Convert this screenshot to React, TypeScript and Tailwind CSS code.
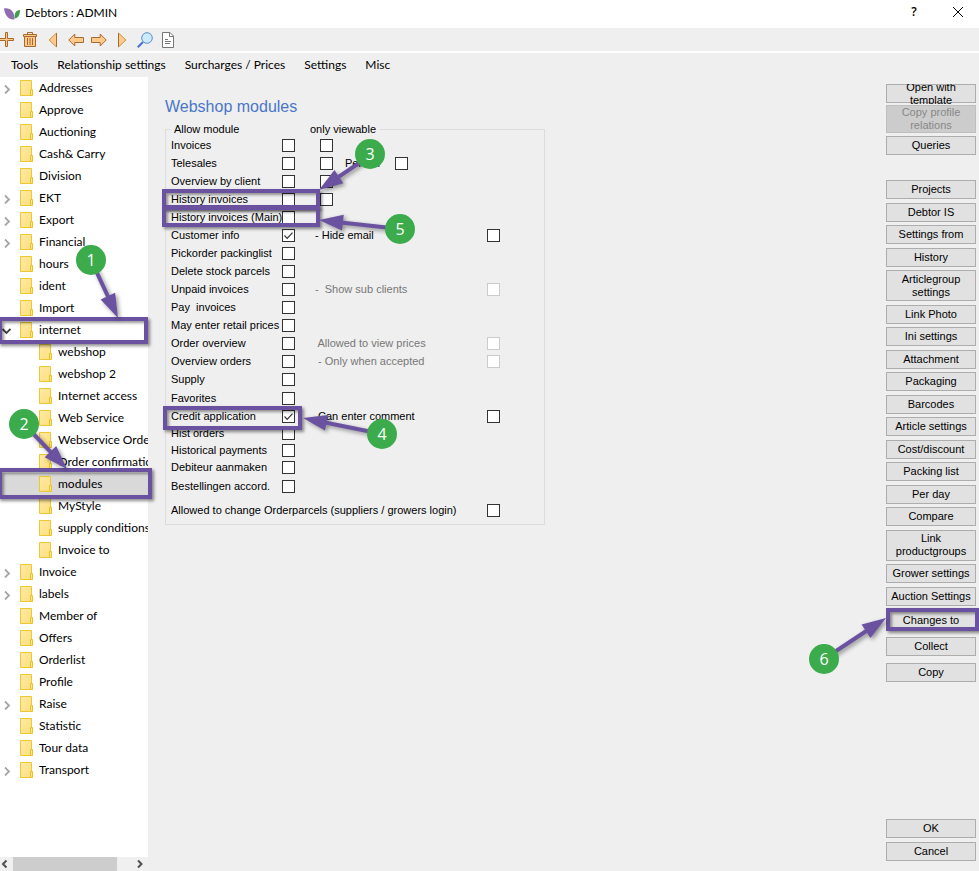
import type { ReactNode } from "react";

const UI = "font-['Lato','Open_Sans',sans-serif]";
const FORM = "font-['Liberation_Sans',Arial,sans-serif]";

type Node = { name: string; level?: 1 | 2; state?: "closed" | "open"; selected?: boolean };

const tree: Node[] = [
  { name: "Addresses", state: "closed" },
  { name: "Approve" },
  { name: "Auctioning" },
  { name: "Cash& Carry" },
  { name: "Division" },
  { name: "EKT", state: "closed" },
  { name: "Export", state: "closed" },
  { name: "Financial", state: "closed" },
  { name: "hours" },
  { name: "ident" },
  { name: "Import" },
  { name: "internet", state: "open" },
  { name: "webshop", level: 2 },
  { name: "webshop 2", level: 2 },
  { name: "Internet access", level: 2 },
  { name: "Web Service", level: 2 },
  { name: "Webservice Order", level: 2 },
  { name: "Order confirmation", level: 2 },
  { name: "modules", level: 2, selected: true },
  { name: "MyStyle", level: 2 },
  { name: "supply conditions", level: 2 },
  { name: "Invoice to", level: 2 },
  { name: "Invoice", state: "closed" },
  { name: "labels", state: "closed" },
  { name: "Member of" },
  { name: "Offers" },
  { name: "Orderlist" },
  { name: "Profile" },
  { name: "Raise", state: "closed" },
  { name: "Statistic" },
  { name: "Tour data" },
  { name: "Transport", state: "closed" },
];

type Row = {
  label: string;
  checked?: boolean;
  viewable?: boolean;
  per?: boolean;
  option?: string;
  disabled?: boolean;
};

const mainRows: Row[] = [
  { label: "Invoices", viewable: true },
  { label: "Telesales", viewable: true, per: true },
  { label: "Overview by client", viewable: true },
  { label: "History invoices", viewable: true },
  { label: "History invoices (Main)" },
  { label: "Customer info", checked: true, option: "- Hide email" },
  { label: "Pickorder packinglist" },
  { label: "Delete stock parcels" },
  { label: "Unpaid invoices", option: "-  Show sub clients", disabled: true },
  { label: "Pay  invoices" },
  { label: "May enter retail prices" },
  { label: "Order overview", option: " Allowed to view prices", disabled: true },
  { label: "Overview orders", option: " - Only when accepted", disabled: true },
  { label: "Supply" },
];
const creditRows: Row[] = [
  { label: "Favorites" },
  { label: "Credit application", checked: true, option: " Can enter comment" },
];
const historyRows: Row[] = [
  { label: "Hist orders" },
  { label: "Historical payments" },
  { label: "Debiteur aanmaken" },
];

const sideButtons = [
  "Projects", "Debtor IS", "Settings from", "History", "Articlegroup settings", "Link Photo",
  "Ini settings", "Attachment", "Packaging", "Barcodes", "Article settings", "Cost/discount",
  "Packing list", "Per day", "Compare", "Link productgroups", "Grower settings", "Auction Settings",
];
const tallButtons = ["Articlegroup settings", "Link productgroups"];

function Folder() {
  return (
    <svg className="h-4 w-3.5 shrink-0" viewBox="0 0 14 16" aria-hidden="true">
      <defs>
        <linearGradient id="folder" x1="0" y1="0" x2="1" y2="1">
          <stop offset="0" stopColor="#ffeaa6" />
          <stop offset="1" stopColor="#fddf7c" />
        </linearGradient>
      </defs>
      <path d="M.5.500h11v15H.5z" fill="url(#folder)" stroke="#edc832" />
      <path d="M10.500 9.500h2v6h-2z" fill="#fde58c" stroke="#e8c229" />
    </svg>
  );
}

function Chevron({ open }: { open: boolean }) {
  return open ? (
    <svg className="h-2.5 w-2.5" viewBox="0 0 10 10" aria-hidden="true">
      <path d="M1.500 3l4 4 4-4" fill="none" stroke="#404040" strokeWidth="1.800" />
    </svg>
  ) : (
    <svg className="h-2.5 w-2.5" viewBox="0 0 10 10" aria-hidden="true">
      <path d="M4 1.500l4 4-4 4" fill="none" stroke="#a6a6a6" strokeWidth="1.800" />
    </svg>
  );
}

function TreeRow({ node }: { node: Node }) {
  return (
    <li className={`flex h-[22px] items-center whitespace-nowrap ${node.selected ? "bg-[#d9d9d9]" : ""}`}>
      <span className={`flex shrink-0 pt-0.5 pl-px ${node.level === 2 ? "w-[39px]" : "w-5"}`}>
        {node.state && <Chevron open={node.state === "open"} />}
      </span>
      <Folder />
      <span className="pl-[5px]">{node.name}</span>
    </li>
  );
}

function Box({ id, label, checked, disabled }: { id: string; label: string; checked?: boolean; disabled?: boolean }) {
  return (
    <span className="grid size-[13px] shrink-0">
      <input
        id={id}
        type="checkbox"
        aria-label={label}
        defaultChecked={checked}
        disabled={disabled}
        className="peer col-start-1 row-start-1 size-[13px] appearance-none border border-[#333] bg-white disabled:border-[#ccc]"
      />
      <svg className="pointer-events-none invisible col-start-1 row-start-1 size-[13px] peer-checked:visible" viewBox="0 0 13 13" aria-hidden="true">
        <path d="M2.500 6.500l2.700 2.800 5.300-5.600" fill="none" stroke="#333" strokeWidth="1.200" />
      </svg>
    </span>
  );
}

function ModuleRow({ row, height }: { row: Row; height: string }) {
  const id = row.label.toLowerCase().replace(/[^a-z]+/g, "-");
  return (
    <div className={`flex items-center whitespace-pre ${height}`}>
      <label htmlFor={id} className="w-[111px] shrink-0">{row.label}</label>
      <Box id={id} label={row.label} checked={row.checked} />
      {row.viewable && (
        <span className="ml-[25px] flex items-center">
          <Box id={`${id}-view`} label={`${row.label} only viewable`} />
          {row.per && (
            <>
              <label htmlFor="per-uur" className="ml-3 w-[50px]">Per uur</label>
              <Box id="per-uur" label="Per uur" />
            </>
          )}
        </span>
      )}
      {row.option && (
        <span className="ml-5 flex items-center">
          <label htmlFor={`${id}-option`} className={`w-[172px] ${row.disabled ? "text-[#777]" : ""}`}>{row.option}</label>
          <Box id={`${id}-option`} label={row.option} disabled={row.disabled} />
        </span>
      )}
    </div>
  );
}

function SideButton({ children, tall }: { children: ReactNode; tall?: boolean }) {
  return (
    <button
      type="button"
      className={`flex w-full shrink-0 items-center justify-center border border-[#adadad] bg-[#e1e1e1] text-center leading-[13px] ${tall ? "h-[31px] px-2" : "h-[19px]"}`}
    >
      {children}
    </button>
  );
}

function Arrow({ x1, y1, x2, y2 }: { x1: number; y1: number; x2: number; y2: number }) {
  const length = Math.hypot(x2 - x1, y2 - y1);
  const angle = (Math.atan2(y2 - y1, x2 - x1) * 180) / Math.PI;
  return (
    <g transform={`translate(${x1} ${y1}) rotate(${angle})`}>
      <path d={`M0-2H${length - 20}V2H0z`} />
      <path d={`M${length} 0l-24-8v16z`} />
    </g>
  );
}

function Badge({ n, place }: { n: number; place: string }) {
  return (
    <span className={`absolute flex size-[30px] items-center justify-center rounded-full bg-[#3bab4c] font-['Open_Sans','Noto_Sans',sans-serif] text-base text-white ${place}`}>
      {n}
    </span>
  );
}

function Mark({ place }: { place: string }) {
  return (
    <span className={`absolute border-4 border-[#6b52a1] shadow-[2px_2px_3px_rgba(0,0,0,0.45),inset_2px_2px_3px_rgba(0,0,0,0.4)] ${place}`} />
  );
}

function Toolbar() {
  const arrow = { fill: "#fdc98c", stroke: "#a8692a" };
  const tool = "flex h-[22px] shrink-0 items-center justify-center";
  return (
    <div className="flex h-[25px] shrink-0 items-end border-b-2 border-white">
      <button type="button" aria-label="Add" className={`${tool} w-[18px]`}>
        <svg className="-ml-1.5 h-4 w-4" viewBox="0 0 16 16">
          <path d="M7.500.500h2v6h6v2h-6v6h-2v-6h-7v-2h7z" {...arrow} />
        </svg>
      </button>
      <button type="button" aria-label="Delete" className={`${tool} w-6`}>
        <svg className="h-4 w-4" viewBox="0 0 16 16">
          <path d="M2.500 4.500h11v10h-11z" {...arrow} />
          <path d="M1.500 2.500h13v2h-13z" {...arrow} />
          <path d="M5.500 2.500v-2h5v2M5.500 6v7M8 6v7M10.500 6v7" fill="none" stroke="#a8692a" />
        </svg>
      </button>
      <button type="button" aria-label="First" className={`${tool} w-[22px]`}>
        <svg className="h-4 w-4" viewBox="0 0 16 16">
          <path d="M4 8l7.500-7v14z" fill="#fdc98c" />
          <path d="M11.500 1v14" stroke="#a8692a" />
          <path d="M11.500 1L4 8l7.500 7" fill="none" stroke="#c99b3a" />
        </svg>
      </button>
      <button type="button" aria-label="Previous" className={`${tool} w-6`}>
        <svg className="h-4 w-4" viewBox="0 0 16 16">
          <path d="M.800 8l6-6v3.500h8.700v5H6.800V14z" {...arrow} />
        </svg>
      </button>
      <button type="button" aria-label="Next" className={`${tool} w-[22px]`}>
        <svg className="h-4 w-4" viewBox="0 0 16 16">
          <path d="M15.200 8l-6-6v3.500H.500v5h8.700V14z" {...arrow} />
        </svg>
      </button>
      <button type="button" aria-label="Last" className={`${tool} w-6`}>
        <svg className="h-4 w-4" viewBox="0 0 16 16">
          <path d="M12 8L4.500 1v14z" fill="#fdc98c" />
          <path d="M4.500 1v14" stroke="#a8692a" />
          <path d="M4.500 1L12 8l-7.500 7" fill="none" stroke="#c99b3a" />
        </svg>
      </button>
      <button type="button" aria-label="Search" className={`${tool} w-[22px]`}>
        <svg className="h-4 w-4" viewBox="0 0 16 16">
          <path d="M.800 15.200L6 10" stroke="#4472d8" strokeWidth="2" />
          <circle cx="10" cy="6" r="5.300" fill="#cdeafd" stroke="#5b8cc8" />
        </svg>
      </button>
      <button type="button" aria-label="Document" className={`${tool} w-6`}>
        <svg className="h-4 w-4" viewBox="0 0 16 16">
          <path d="M2.500.500h7.500l3.500 3.500v11.500h-11z" fill="#fff" stroke="#777" />
          <path d="M9.500.500V4.500h4M5 7.500h3M5 9.500h6M5 11.500h5" fill="none" stroke="#777" />
        </svg>
      </button>
    </div>
  );
}

export default function App() {
  return (
    <div className={`relative flex h-screen flex-col overflow-hidden bg-[#efefef] text-xs text-black ${UI}`}>
      <header className="flex h-7 shrink-0 items-center bg-white pr-[13px] pl-1">
        <svg className="h-3 w-4" viewBox="0 0 16 12" aria-hidden="true">
          <path d="M0 .500C6-.500 10.500 3 10.500 11.500 4 12 1 7 0 .500z" fill="#8f6db3" />
          <path d="M16 2c-4 0-6 3.500-5.300 8.500C14 10 16 7 16 2z" fill="#3f9f4c" />
        </svg>
        <h1 className="flex-1 pb-0.5 pl-[5px]">Debtors : ADMIN</h1>
        <button type="button" aria-label="Help" className="w-4 pb-1 font-['Open_Sans','Noto_Sans',sans-serif] font-semibold">?</button>
        <button type="button" aria-label="Close" className="ml-7 flex w-4 justify-center pb-1">
          <svg className="size-3" viewBox="0 0 12 12">
            <path d="M1 1l10 10M11 1L1 11" stroke="#000" />
          </svg>
        </button>
      </header>

      <Toolbar />

      <nav className="flex h-6 shrink-0 items-center gap-[19px] pl-[11px] whitespace-nowrap">
        {["Tools", "Relationship settings", "Surcharges / Prices", "Settings", "Misc"].map((m) => (
          <button key={m} type="button">{m}</button>
        ))}
      </nav>

      <div className="flex min-h-0 flex-1">
        <aside className="flex w-[148px] shrink-0 flex-col bg-white">
          <ul className="min-h-0 flex-1 overflow-hidden">
            {tree.map((node) => (
              <TreeRow key={node.name} node={node} />
            ))}
          </ul>
          <div className="flex h-3.5 shrink-0 items-center bg-[#f0f0f0]">
            <svg className="h-2.5 w-[13px]" viewBox="0 0 13 10" aria-hidden="true">
              <path d="M6.500 1.500L3 5l3.500 3.500" fill="none" stroke="#505050" strokeWidth="2" />
            </svg>
            <span className="h-full w-[104px] bg-[#cdcdcd]" />
            <svg className="ml-auto h-2.5 w-[13px]" viewBox="0 0 13 10" aria-hidden="true">
              <path d="M3 1.500L6.500 5 3 8.500" fill="none" stroke="#505050" strokeWidth="2" />
            </svg>
          </div>
        </aside>

        <main className={`flex-1 pt-[18px] pl-[17px] text-[11px] leading-[13px] ${FORM}`}>
          <h2 className="text-base leading-6 text-[#4a76c9]">Webshop modules</h2>
          <fieldset className="mt-1 w-[380px] border border-[#dcdcdc] pl-[5px]">
            <legend className="flex pr-1 pl-[3px]">
              <span className="w-[136px]">Allow module</span>
              <span>only viewable</span>
            </legend>
            {mainRows.map((row) => (
              <ModuleRow key={row.label} row={row} height="h-[18px]" />
            ))}
            <div className="pt-px">
              {creditRows.map((row) => (
                <ModuleRow key={row.label} row={row} height="h-[18px]" />
              ))}
            </div>
            {historyRows.map((row) => (
              <ModuleRow key={row.label} row={row} height="h-[17px]" />
            ))}
            <ModuleRow row={{ label: "Bestellingen accord." }} height="h-5" />
            <div className="flex h-7 items-center whitespace-nowrap">
              <label htmlFor="parcels" className="w-[316px]">
                Allowed to change Orderparcels (suppliers / growers login)
              </label>
              <Box id="parcels" label="Allowed to change Orderparcels" />
            </div>
          </fieldset>
        </main>

        <aside className={`relative mr-[3px] flex w-[90px] shrink-0 flex-col pt-[7px] pb-2.5 text-[11px] ${FORM}`}>
          <SideButton>
            <span className="flex h-5 items-center overflow-hidden">Open with template</span>
          </SideButton>
          <button
            type="button"
            disabled
            className="mt-0.5 h-7 shrink-0 border border-[#bfbfbf] bg-[#ccc] px-2 text-center leading-[13px] text-[#888]"
          >
            Copy profile relations
          </button>
          <div className="mt-[3px]">
            <SideButton>Queries</SideButton>
          </div>
          <div className="mt-[25px] flex h-[426px] shrink-0 flex-col justify-between">
            {sideButtons.map((b) => (
              <SideButton key={b} tall={tallButtons.includes(b)}>{b}</SideButton>
            ))}
          </div>
          <div className="mt-[5px] flex flex-col gap-[7px]">
            <SideButton>Changes to</SideButton>
            <SideButton>Collect</SideButton>
            <SideButton>Copy</SideButton>
          </div>
          <div className="mt-auto flex flex-col gap-1">
            <SideButton>OK</SideButton>
            <SideButton>Cancel</SideButton>
          </div>

          <div className="pointer-events-none absolute inset-0">
            <Mark place="top-[531px] left-0 h-[23px] w-[93px]" />
            <svg className="absolute top-[520px] -left-20 h-24 w-20 overflow-visible fill-[#6b52a1] drop-shadow-[2px_2px_2px_rgba(0,0,0,0.4)]">
              <Arrow x1={18} y1={62} x2={80} y2={21} />
            </svg>
            <Badge n={6} place="top-[567px] -left-[77px]" />
          </div>
        </aside>
      </div>

      <div className="pointer-events-none absolute inset-0">
        <Mark place="top-[317px] -left-0.5 h-[27px] w-[150px]" />
        <Mark place="top-[468px] -left-0.5 h-[31px] w-[154px]" />
        <Mark place="top-[189px] left-[162px] h-5 w-[158px]" />
        <Mark place="top-[206px] left-[162px] h-[21px] w-[158px]" />
        <Mark place="top-[406px] left-[163px] h-6 w-[139px]" />
        <svg className="absolute inset-0 size-full fill-[#6b52a1] drop-shadow-[2px_2px_2px_rgba(0,0,0,0.4)]">
          <Arrow x1={91} y1={260} x2={118} y2={318} />
          <Arrow x1={24} y1={424} x2={67} y2={469} />
          <Arrow x1={371} y1={155} x2={319} y2={190} />
          <Arrow x1={400} y1={229} x2={319} y2={220} />
          <Arrow x1={382} y1={434} x2={303} y2={418} />
        </svg>
        <Badge n={1} place="top-[245px] left-[76px]" />
        <Badge n={2} place="top-[409px] left-[9px]" />
        <Badge n={3} place="top-[139px] left-[355px]" />
        <Badge n={5} place="top-[214px] left-[385px]" />
        <Badge n={4} place="top-[419px] left-[367px]" />
      </div>
    </div>
  );
}
